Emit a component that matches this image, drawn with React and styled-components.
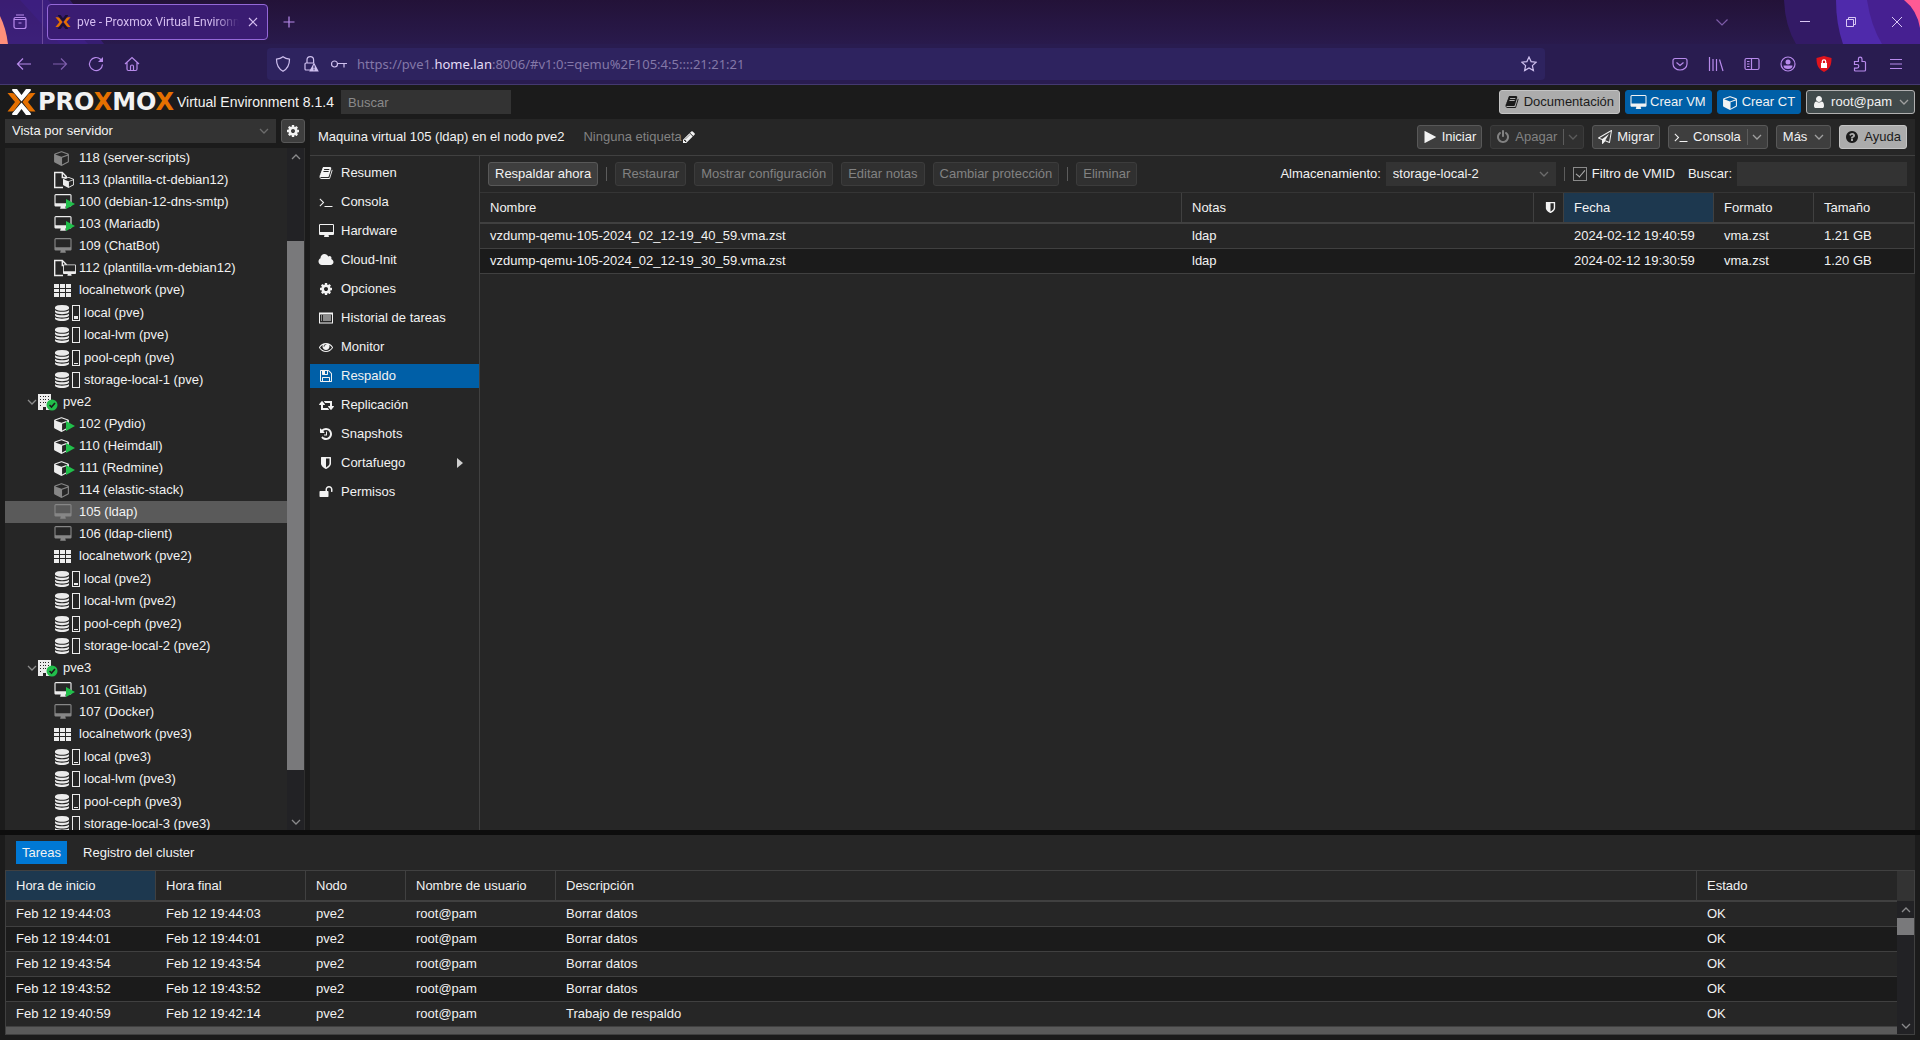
import React from "react";
import styled, { createGlobalStyle } from "styled-components";

const desktopPath =
  "M1792 992v-832q0-13-9.5-22.5t-22.5-9.5h-1600q-13 0-22.5 9.5t-9.5 22.5v832q0 13 9.5 22.5t22.5 9.5h1600q13 0 22.5-9.5t9.5-22.5zm128-832v1088q0 66-47 113t-113 47h-544q0 37 16 77.5t32 71 16 43.5q0 26-19 45t-45 19h-512q-26 0-45-19t-19-45q0-14 16-44t32-70 16-78h-544q-66 0-113-47t-47-113v-1088q0-66 47-113t113-47h1600q66 0 113 47t47 113z";
const cubePath =
  "M896 1629l640-349v-636l-640 233v752zm-64-865l698-254-698-254-698 254zm832-252v768q0 35-18 65t-49 47l-704 384q-28 16-61 16t-61-16l-704-384q-31-17-49-47t-18-65v-768q0-40 23-73t61-47l704-256q22-8 44-8t44 8l704 256q38 14 61 47t23 73z";
const databasePath =
  "M896 768q237 0 443-43t325-127v170q0 69-103 128t-280 93.5-385 34.5-385-34.5-280-93.5-103-128v-170q119 84 325 127t443 43zm0 768q237 0 443-43t325-127v170q0 69-103 128t-280 93.5-385 34.5-385-34.5-280-93.5-103-128v-170q119 84 325 127t443 43zm0-384q237 0 443-43t325-127v170q0 69-103 128t-280 93.5-385 34.5-385-34.5-280-93.5-103-128v-170q119 84 325 127t443 43zm0-1152q208 0 385 34.5t280 93.5 103 128v128q0 69-103 128t-280 93.5-385 34.5-385-34.5-280-93.5-103-128v-128q0-69 103-128t280-93.5 385-34.5z";

// name: [viewBox width, path]
const glyphs = {
  desktop: [1920, desktopPath],
  cube: [1664, cubePath],
  book: [
    1792,
    "M1703 478q40 57 18 129l-275 906q-19 64-76.5 107.5t-122.5 43.5h-923q-77 0-148.5-53.5t-99.5-131.5q-24-67-2-127 0-4 3-27t4-37q1-8-3-21.5t-3-19.5q2-11 8-21t16.5-23.5 16.5-23.5q23-38 45-91.5t30-91.5q3-10 .5-30t-.5-28q3-11 17-28t17-23q21-36 42-92t25-90q1-9-2.5-32t.5-28q4-13 22-30.5t22-22.5q19-26 42.5-84.5t27.5-96.5q1-8-3-25.5t-2-26.5q2-8 9-18t18-23 17-21q8-12 16.5-30.5t15-35 16-36 19.5-32 26.5-23.5 36-11.5 47.5 5.5l-1 3q38-9 51-9h761q74 0 114 56t18 130l-274 906q-36 119-71.5 153.5t-128.5 34.5h-869q-27 0-38 15-11 16-1 43 24 70 144 70h923q29 0 56-15.5t35-41.5l300-987q7-22 5-57 38 15 59 43zm-1064 2q-4 13 2 22.5t20 9.5h608q13 0 25.5-9.5t16.5-22.5l21-64q4-13-2-22.5t-20-9.5h-608q-13 0-25.5 9.5t-16.5 22.5zm-83 256q-4 13 2 22.5t20 9.5h608q13 0 25.5-9.5t16.5-22.5l21-64q4-13-2-22.5t-20-9.5h-608q-13 0-25.5 9.5t-16.5 22.5z",
  ],
  cog: [
    1792,
    "M1152 896q0-106-75-181t-181-75-181 75-75 181 75 181 181 75 181-75 75-181zm512-109v222q0 12-8 23t-20 13l-185 28q-19 54-39 91 35 50 107 138 10 12 10 25t-9 23q-27 37-99 108t-94 71q-12 0-26-9l-138-108q-44 23-91 38-16 136-29 186-7 28-36 28h-222q-14 0-24.5-8.5t-11.5-21.5l-28-184q-49-16-90-37l-141 107q-10 9-25 9-14 0-25-11-126-114-165-168-7-10-7-23 0-12 8-23 15-21 51-66.5t54-70.5q-27-50-41-99l-183-27q-13-2-21-12.5t-8-23.5v-222q0-12 8-23t19-13l186-28q14-46 39-92-40-57-107-138-10-12-10-24 0-10 9-23 26-36 98.5-107.5t94.5-71.5q13 0 26 10l138 107q44-23 91-38 16-136 29-186 7-28 36-28h222q14 0 24.5 8.5t11.5 21.5l28 184q49 16 90 37l142-107q9-9 24-9 13 0 25 10 129 119 165 170 7 8 7 22 0 12-8 23-15 21-51 66.5t-54 70.5q26 50 41 98l183 28q13 2 21 12.5t8 23.5z",
  ],
  terminal: [
    1792,
    "M649 983l-466 466q-10 10-23 10t-23-10l-50-50q-10-10-10-23t10-23l393-393-393-393q-10-10-10-23t10-23l50-50q10-10 23-10t23 10l466 466q10 10 10 23t-10 23zm1079 457v64q0 14-9 23t-23 9h-960q-14 0-23-9t-9-23v-64q0-14 9-23t23-9h960q14 0 23 9t9 23z",
  ],
  cloud: [
    2048,
    "M1984 1152q0 159-112.5 271.5t-271.5 112.5h-1088q-185 0-316.5-131.5t-131.5-316.5q0-132 71-241.5t187-163.5q-2-28-2-43 0-212 150-362t362-150q158 0 286.5 88t187.5 230q70-62 166-62 106 0 181 75t75 181q0 75-41 138 129 30 213 134.5t84 239.5z",
  ],
  list: [
    1792,
    "M0 192h1792v1408h-1792zm128 256v1024h1536v-1024zM256 576h128v128h-128zM512 576h1024v128h-1024zM256 832h128v128h-128zM512 832h1024v128h-1024zM256 1088h128v128h-128zM512 1088h1024v128h-1024z",
  ],
  eye: [
    1792,
    "M1664 960q-152-236-381-353 61 104 61 225 0 185-131.5 316.5t-316.5 131.5-316.5-131.5-131.5-316.5q0-121 61-225-229 117-381 353 133 205 333.5 326.5t434.5 121.5 434.5-121.5 333.5-326.5zm-720-384q0-20-14-34t-34-14q-125 0-214.5 89.5t-89.5 214.5q0 20 14 34t34 14 34-14 14-34q0-86 61-147t147-61q20 0 34-14t14-34zm848 384q0 34-20 69-140 230-376.5 368.5t-499.5 138.5-499.5-139-376.5-368q-20-35-20-69t20-69q140-229 376.5-368t499.5-139 499.5 139 376.5 368q20 35 20 69z",
  ],
  floppy: [
    1792,
    "M512 1536h768v-384h-768v384zm896 0h128v-896q0-14-10-38.5t-20-34.5l-281-281q-10-10-34-20t-39-10v416q0 40-28 68t-68 28h-576q-40 0-68-28t-28-68v-416h-128v1280h128v-416q0-40 28-68t68-28h832q40 0 68 28t28 68v416zm-384-928v-320q0-13-9.5-22.5t-22.5-9.5h-192q-13 0-22.5 9.5t-9.5 22.5v320q0 13 9.5 22.5t22.5 9.5h192q13 0 22.5-9.5t9.5-22.5zm640 32v928q0 40-28 68t-68 28h-1344q-40 0-68-28t-28-68v-1344q0-40 28-68t68-28h928q40 0 88 20t76 48l280 280q28 28 48 76t20 88z",
  ],
  retweet: [
    1920,
    "M1280 1504q0 13-9.5 22.5t-22.5 9.5h-960q-8 0-13.5-2t-9-7-5.5-8-3-11.5-1-11.5v-600h-192q-26 0-45-19t-19-45q0-24 15-41l320-384q19-22 49-22t49 22l320 384q15 17 15 41 0 26-19 45t-45 19h-192v384h576q16 0 25 11l160 192q7 10 7 21zm640-416q0 24-15 41l-320 384q-20 23-49 23t-49-23l-320-384q-15-17-15-41 0-26 19-45t45-19h192v-384h-576q-16 0-25-12l-160-192q-7-9-7-20 0-13 9.5-22.5t22.5-9.5h960q8 0 13.5 2t9 7 5.5 8 3 11.5 1 11.5v600h192q26 0 45 19t19 45z",
  ],
  history: [
    1792,
    "M1664 896q0 156-61 298t-164 245-245 164-298 61q-172 0-327-72.5t-264-204.5q-7-10-6.5-22.5t8.5-20.5l137-138q10-9 25-9 16 2 23 12 73 95 179 147t225 52q104 0 198.5-40.5t163.5-109.5 109.5-163.5 40.5-198.5-40.5-198.5-109.5-163.5-163.5-109.5-198.5-40.5q-98 0-188 35.5t-160 101.5l137 138q31 30 14 69-17 40-59 40h-448q-26 0-45-19t-19-45v-448q0-42 40-59 39-17 69 14l130 129q107-101 244.5-156.5t284.5-55.5q156 0 298 61t245 164 164 245 61 298zm-640-288v448q0 14-9 23t-23 9h-320q-14 0-23-9t-9-23v-64q0-14 9-23t23-9h224v-352q0-14 9-23t23-9h64q14 0 23 9t9 23z",
  ],
  shield: [
    1792,
    "M1344 960v-640h-448v1137q119-63 213-137 235-184 235-360zm192-768v768q0 86-33.5 170.5t-83 150-118 127.5-126.5 103-121 77.5-89.5 49.5-42.5 20q-12 6-26 6t-26-6q-16-7-42.5-20t-89.5-49.5-121-77.5-126.5-103-118-127.5-83-150-33.5-170.5v-768q0-26 19-45t45-19h1152q26 0 45 19t19 45z",
  ],
  unlock: [
    1792,
    "M1728 576v256q0 26-19 45t-45 19h-64q-26 0-45-19t-19-45v-256q0-106-75-181t-181-75-181 75-75 181v192h96q40 0 68 28t28 68v576q0 40-28 68t-68 28h-960q-40 0-68-28t-28-68v-576q0-40 28-68t68-28h672v-192q0-185 131.5-316.5t316.5-131.5 316.5 131.5 131.5 316.5z",
  ],
  pencil: [
    1792,
    "M491 1536l91-91-235-235-91 91v107h128v128h107zm523-928q0-22-22-22-10 0-17 7l-542 542q-7 7-7 17 0 22 22 22 10 0 17-7l542-542q7-7 7-17zm-54-192l416 416-832 832h-416v-416zm683 96q0 53-37 90l-166 166-416-416 166-165q36-38 90-38 53 0 91 38l235 234q37 39 37 91z",
  ],
  play: [1792, "M192 160q0-60 52-30l1400 742q40 24 0 48l-1400 742q-52 30-52-30z"],
  power: [
    1792,
    "M1664 896q0 156-61 298t-164 245-245 164-298 61-298-61-245-164-164-245-61-298q0-182 80.5-343t226.5-270q43-32 95.5-25t83.5 50q32 42 24.5 94.5t-49.5 84.5q-98 74-151.5 181t-53.5 228q0 104 40.5 198.5t109.5 163.5 163.5 109.5 198.5 40.5 198.5-40.5 163.5-109.5 109.5-163.5 40.5-198.5q0-121-53.5-228t-151.5-181q-42-32-49.5-84.5t24.5-94.5q31-43 84-50t95 25q146 109 226.5 270t80.5 343zm-640-768v640q0 52-38 90t-90 38-90-38-38-90v-640q0-52 38-90t90-38 90 38 38 90z",
  ],
  plane: [
    1792,
    "M1764 11q33 24 27 64l-256 1536q-5 29-32 45-14 8-31 8-11 0-24-5l-527-215-298 327q-18 21-47 21-14 0-23-4-19-7-30-23.5t-11-36.5v-452l-472-193q-37-14-40-55-3-39 32-59l1664-960q35-21 68 2zm-342 1499l221-1323-1434 827 336 137 863-639-478 797z",
  ],
  question: [
    1792,
    "M1024 1376v-192q0-14-9-23t-23-9h-192q-14 0-23 9t-9 23v192q0 14 9 23t23 9h192q14 0 23-9t9-23zm256-672q0-88-55.5-163t-138.5-116-170-41q-243 0-371 213-15 24 8 42l132 100q7 6 19 6 16 0 25-12 53-68 86-92 34-24 86-24 48 0 85.5 26t37.5 59q0 38-20 61t-68 45q-63 28-115.5 86.5t-52.5 125.5v36q0 14 9 23t23 9h192q14 0 23-9t9-23q0-19 21.5-49.5t54.5-49.5q32-18 49-28.5t46-35 44.5-48 28-60.5 12.5-81zm384 192q0 209-103 385.5t-279.5 279.5-385.5 103-385.5-103-279.5-279.5-103-385.5 103-385.5 279.5-279.5 385.5-103 385.5 103 279.5 279.5 103 385.5z",
  ],
  user: [
    1792,
    "M1536 1399q0 109-62.5 187t-150.5 78h-854q-88 0-150.5-78t-62.5-187q0-85 8.5-160.5t31.5-152 58.5-131 94-89 134.5-34.5q131 128 313 128t313-128q76 0 134.5 34.5t94 89 58.5 131 31.5 152 8.5 160.5zm-256-887q0 159-112.5 271.5t-271.5 112.5-271.5-112.5-112.5-271.5 112.5-271.5 271.5-112.5 271.5 112.5 112.5 271.5z",
  ],
};

const Glyph = ({ name, size = 14 }) => {
  const [width, d] = glyphs[name];
  return (
    <svg
      height={size}
      width={Math.ceil((size * width) / 1792)}
      viewBox={`0 0 ${width} 1792`}
      fill="currentColor"
      fillRule={name === "list" ? "evenodd" : "nonzero"}
      aria-hidden="true"
    >
      <path d={d} />
    </svg>
  );
};

const Chevron = ({ up }) => (
  <svg width="10" height="6" viewBox="0 0 10 6" fill="none" stroke="currentColor" aria-hidden="true">
    <path d={up ? "M1 5l4-4 4 4" : "M1 1l4 4 4-4"} strokeWidth="1.3" />
  </svg>
);

const treeRows = [
  { icon: "ctOff", text: "118 (server-scripts)" },
  { icon: "ctTemplate", text: "113 (plantilla-ct-debian12)" },
  { icon: "vmOn", text: "100 (debian-12-dns-smtp)" },
  { icon: "vmOn", text: "103 (Mariadb)" },
  { icon: "vmOff", text: "109 (ChatBot)" },
  { icon: "vmTemplate", text: "112 (plantilla-vm-debian12)" },
  { icon: "network", text: "localnetwork (pve)" },
  { icon: "storage", text: "local (pve)", usage: 3 },
  { icon: "storage", text: "local-lvm (pve)" },
  { icon: "storage", text: "pool-ceph (pve)", usage: 1 },
  { icon: "storage", text: "storage-local-1 (pve)" },
  { icon: "node", text: "pve2" },
  { icon: "ctOn", text: "102 (Pydio)" },
  { icon: "ctOn", text: "110 (Heimdall)" },
  { icon: "ctOn", text: "111 (Redmine)" },
  { icon: "ctOff", text: "114 (elastic-stack)" },
  { icon: "vmOff", text: "105 (ldap)", selected: true },
  { icon: "vmOff", text: "106 (ldap-client)" },
  { icon: "network", text: "localnetwork (pve2)" },
  { icon: "storage", text: "local (pve2)", usage: 2 },
  { icon: "storage", text: "local-lvm (pve2)" },
  { icon: "storage", text: "pool-ceph (pve2)", usage: 1 },
  { icon: "storage", text: "storage-local-2 (pve2)" },
  { icon: "node", text: "pve3" },
  { icon: "vmOn", text: "101 (Gitlab)" },
  { icon: "vmOff", text: "107 (Docker)" },
  { icon: "network", text: "localnetwork (pve3)" },
  { icon: "storage", text: "local (pve3)", usage: 1 },
  { icon: "storage", text: "local-lvm (pve3)" },
  { icon: "storage", text: "pool-ceph (pve3)", usage: 1 },
  { icon: "storage", text: "storage-local-3 (pve3)" },
];

const navItems = [
  { icon: "book", text: "Resumen" },
  { icon: "terminal", text: "Consola" },
  { icon: "desktop", text: "Hardware" },
  { icon: "cloud", text: "Cloud-Init" },
  { icon: "cog", text: "Opciones" },
  { icon: "list", text: "Historial de tareas" },
  { icon: "eye", text: "Monitor" },
  { icon: "floppy", text: "Respaldo", active: true },
  { icon: "retweet", text: "Replicación" },
  { icon: "history", text: "Snapshots" },
  { icon: "shield", text: "Cortafuego", more: true },
  { icon: "unlock", text: "Permisos" },
];

const backups = [
  ["vzdump-qemu-105-2024_02_12-19_40_59.vma.zst", "ldap", "", "2024-02-12 19:40:59", "vma.zst", "1.21 GB"],
  ["vzdump-qemu-105-2024_02_12-19_30_59.vma.zst", "ldap", "", "2024-02-12 19:30:59", "vma.zst", "1.20 GB"],
];

const tasks = [
  ["Feb 12 19:44:03", "Feb 12 19:44:03", "pve2", "root@pam", "Borrar datos", "OK"],
  ["Feb 12 19:44:01", "Feb 12 19:44:01", "pve2", "root@pam", "Borrar datos", "OK"],
  ["Feb 12 19:43:54", "Feb 12 19:43:54", "pve2", "root@pam", "Borrar datos", "OK"],
  ["Feb 12 19:43:52", "Feb 12 19:43:52", "pve2", "root@pam", "Borrar datos", "OK"],
  ["Feb 12 19:40:59", "Feb 12 19:42:14", "pve2", "root@pam", "Trabajo de respaldo", "OK"],
];

const TreeIcon = ({ icon, usage }) => {
  const white = "#ececec";
  const gray = "#868686";
  const green = "#21bf4b";
  if (icon === "node") {
    return (
      <svg width="25" height="18" aria-hidden="true">
        <path
          fill={white}
          fillRule="evenodd"
          d="M0 1h13v16H0zM2 3v1h1v-1zM5 3v1h1v-1zM7 3v1h1v-1zM10 3v1h1v-1zM2 6v1h1v-1zM5 6v1h1v-1zM7 6v1h1v-1zM10 6v1h1v-1zM2 9v1h1v-1zM5 9v1h1v-1zM7 9v1h1v-1zM2 12v1h1v-1zM5 14v3h3v-3z"
        />
        <circle cx="14" cy="12" r="5.5" fill={green} />
        <path d="M11.500 12l2 2 3.500-4" fill="none" stroke="#1b1b1b" strokeWidth="1.6" />
      </svg>
    );
  }
  if (icon === "network") {
    return (
      <svg width="25" height="18" aria-hidden="true">
        {[3, 8, 12].map((y) =>
          [0, 6, 12].map((x) => <rect key={`${x}${y}`} x={x} y={y} width="5" height={y === 8 ? 3 : 4} fill={white} />)
        )}
      </svg>
    );
  }
  if (icon === "storage") {
    return (
      <svg width="30" height="18" aria-hidden="true">
        <svg x="1" y="1" width="14" height="16" viewBox="128 0 1536 1792" preserveAspectRatio="none">
          <path d={databasePath} fill={white} />
        </svg>
        <rect x="18.500" y="1.500" width="7" height="15" fill="none" stroke={white} />
        {usage && <rect x="20" y={15 - usage} width="4" height={usage} fill={white} />}
      </svg>
    );
  }
  if (icon === "ctTemplate" || icon === "vmTemplate") {
    return (
      <svg width="25" height="18" aria-hidden="true">
        <path d="M9 16.500H.7V1.500h7.600l4 4V8M8.300 1.500v5H12" fill="none" stroke={white} strokeWidth="1.4" />
        {icon === "ctTemplate" ? (
          <svg x="9" y="5" width="11" height="12" viewBox="0 0 1664 1792">
            <path d="M0 512L832 200l832 312v800l-832 440-832-440z" fill="#262626" />
            <path d={cubePath} fill={white} />
          </svg>
        ) : (
          <svg x="9" y="5" width="13" height="13" viewBox="0 0 1920 1792">
            <path d="M60 60h1800v1300H60z" fill="#262626" />
            <path d={desktopPath} fill={white} />
          </svg>
        )}
      </svg>
    );
  }
  const on = icon.endsWith("On");
  const vm = icon.startsWith("vm");
  return (
    <svg width="25" height="18" aria-hidden="true">
      <svg y="1" width={vm ? 18 : 15} height="16" viewBox={vm ? "0 0 1920 1792" : "0 0 1664 1792"}>
        <path d={vm ? desktopPath : cubePath} fill={on ? white : gray} />
      </svg>
      {on && <path d="M12 6l9 5-9 5z" fill={green} />}
    </svg>
  );
};

// Browser toolbar icons, all drawn on a 16px grid
const shapes = {
  view: <path d="M2 5.500h12v7a2 2 0 0 1-2 2H4a2 2 0 0 1-2-2zM2 5.500c0-1 .5-2 1.500-2h9c1 0 1.500 1 1.500 2M4 1h8M6.500 9h3" />,
  plus: <path d="M8 2.500v11M2.500 8h11" />,
  close: <path d="M4 4l8 8M12 4l-8 8" />,
  down: <path d="M2.500 5.500L8 11l5.500-5.500" />,
  back: <path d="M15 8H1.500M7 2.500L1.500 8 7 13.500" />,
  forward: <path d="M1 8h13.500M9 2.500L14.500 8 9 13.500" />,
  reload: (
    <>
      <path d="M14.500 8.500a6.500 6.500 0 1 1-2-5.200L14 5" />
      <path d="M15 1v5h-5z" fill="currentColor" stroke="none" />
    </>
  ),
  home: <path d="M1 8l7-6.500L15 8M3 6.500V13a1.500 1.500 0 0 0 1.500 1.500h7A1.500 1.500 0 0 0 13 13V6.500M6.500 14.500v-4a1.500 1.500 0 0 1 3 0v4" />,
  guard: <path d="M8 .8c2 1.600 4 2.200 6.500 2.400 0 6-1.500 9.300-6.500 12-5-2.700-6.500-6-6.500-12C4 3 6 2.400 8 .8z" />,
  lock: (
    <>
      <path d="M8 14H3a1 1 0 0 1-1-1V8a1 1 0 0 1 1-1h8M4 7V4a3.300 3.300 0 0 1 6.600 0v3" />
      <path d="M11 6.500L15.800 15.500H6.200z" fill="currentColor" stroke="none" />
      <path d="M11 9.500v3M11 13.300v1" stroke="#2e235f" />
    </>
  ),
  key: (
    <>
      <circle cx="3.500" cy="8" r="3" />
      <path d="M6.500 7.500h9.500M13 7.500v4" />
    </>
  ),
  star: <path d="M8 1l2.100 4.600 5 .6-3.700 3.400 1 5L8 12l-4.400 2.600 1-5L.9 6.200l5-.6z" />,
  pocket: <path d="M3 2.500h10a2 2 0 0 1 2 2V8a7 6 0 0 1-14 0V4.500a2 2 0 0 1 2-2zM4.500 6.500L8 9.500l3.500-3" />,
  library: <path d="M1.500 1v14M5 3v12M8.500 3v12M11.500 3.500L15 15" />,
  sidebar: <path d="M2.500 2.500h11a1.500 1.500 0 0 1 1.500 1.500v8a1.500 1.500 0 0 1-1.500 1.500h-11A1.500 1.500 0 0 1 1 12V4a1.500 1.500 0 0 1 1.500-1.500zM7.500 2.500v11M3 5.500h2.500M3 8h2.500M3 10.500h2.500" />,
  account: (
    <>
      <circle cx="8" cy="8" r="7" />
      <circle cx="8" cy="6" r="2.500" fill="currentColor" stroke="none" />
      <path d="M3.500 9.500h9a4.500 3.500 0 0 1-9 0z" fill="currentColor" stroke="none" />
    </>
  ),
  blocker: (
    <>
      <path d="M8 0l7.500 2c0 7-1.500 11-7.500 14C2 13 .5 9 .5 2z" fill="#e0131c" stroke="none" />
      <path d="M5 7h6v5H5z" fill="#fff" stroke="none" />
      <path d="M6.300 7V5.500a1.700 1.700 0 0 1 3.400 0V7" stroke="#fff" />
    </>
  ),
  puzzle: <path d="M3 15h9.500a1 1 0 0 0 1-1V6.500a1 1 0 0 0-1-1H10V3a1.800 1.800 0 0 0-3.600 0v2.500H2.500v3H5a1.800 1.800 0 0 1 0 3.600H2.500V14.500z" />,
  menu: <path d="M2 3.500h12M2 8h12M2 12.500h12" />,
  minimize: <path d="M3 7.500h10" strokeWidth="1" />,
  restore: <path d="M3.500 5.500h7v7h-7zM5.500 5.500v-2h7v7h-2" strokeWidth="1" />,
  quit: <path d="M3 3l10 10M13 3L3 13" strokeWidth="1" />,
};

const Shape = ({ name }) => (
  <svg width="16" height="16" viewBox="0 0 16 16" fill="none" stroke="currentColor" strokeWidth="1.2" aria-hidden="true">
    {shapes[name]}
  </svg>
);

const ProxmoxMark = ({ width, height, top = "#fff" }) => (
  <svg width={width} height={height} viewBox="0 0 28 26" aria-hidden="true">
    <path d="M5 0h4.500l4.500 6 4.500-6H23q1 1 0 2l-9 10.500L5 2Q4 1 5 0zM5 26h4.500l4.500-6 4.500 6H23q1-1 0-2l-9-10.500L5 24q-1 1 0 2z" fill={top} />
    <path d="M0 4h4q2 0 3 1l6 8-6 8q-1 1.500-3 1.500H0L7.500 13zM28 4h-4q-2 0-3 1l-6 8 6 8q1 1.500 3 1.500h4L20.500 13z" fill="#e57000" />
  </svg>
);

const DataTable = ({ label, columns, rows, sorted }) => (
  <Table aria-label={label}>
    <colgroup>
      {columns.map((col, i) => (
        <Col key={i} $width={col.width} />
      ))}
    </colgroup>
    <thead>
      <tr>
        {columns.map((col, i) => (
          <Th key={i} scope="col" $sorted={i === sorted}>
            {col.title}
          </Th>
        ))}
      </tr>
    </thead>
    <tbody>
      {rows.map((row, r) => (
        <Row key={r}>
          {row.map((cell, i) => (
            <Td key={i}>{cell}</Td>
          ))}
        </Row>
      ))}
    </tbody>
  </Table>
);

const Browser = () => (
  <BrowserBar>
    <TabStrip>
      <Backdrop viewBox="0 0 120 44" $side="left">
        <path d="M0 0h48l40 44H0z" fill="#4a259a" opacity=".6" />
        <path d="M20 0h50l34 44H60z" fill="#3d2085" opacity=".7" />
        <path d="M0 16q6 12 8 28H0z" fill="#ff8f7a" />
      </Backdrop>
      <Backdrop viewBox="0 0 140 44" $side="right">
        <path d="M4 0q1 26 12 44h124V0z" fill="#331a66" />
        <path d="M56 0q0 24 7 44h77V0z" fill="#4f2aab" />
        <path d="M87 0q4 26 15 44h38V0z" fill="#462091" />
        <path d="M124 0q13 10 16 28V0z" fill="#ff5a94" />
      </Backdrop>
      <ViewButton aria-label="Firefox View">
        <Shape name="view" />
      </ViewButton>
      <Tab>
        <ProxmoxMark width={16} height={14} top="#1c0f33" />
        <TabTitle>pve - Proxmox Virtual Environm</TabTitle>
        <TabClose aria-label="Cerrar pestaña">
          <Shape name="close" />
        </TabClose>
      </Tab>
      <ChromeButton aria-label="Nueva pestaña" $wide={42}>
        <Shape name="plus" />
      </ChromeButton>
      <Spacer />
      <ChromeButton aria-label="Listar pestañas" $dim $wide={120}>
        <Shape name="down" />
      </ChromeButton>
      <ChromeButton aria-label="Minimizar" $wide={46} $light>
        <Shape name="minimize" />
      </ChromeButton>
      <ChromeButton aria-label="Restaurar" $wide={46} $light>
        <Shape name="restore" />
      </ChromeButton>
      <ChromeButton aria-label="Cerrar" $wide={46} $light>
        <Shape name="quit" />
      </ChromeButton>
    </TabStrip>
    <NavBar>
      <ChromeButton aria-label="Atrás">
        <Shape name="back" />
      </ChromeButton>
      <ChromeButton aria-label="Adelante" $dim>
        <Shape name="forward" />
      </ChromeButton>
      <ChromeButton aria-label="Recargar">
        <Shape name="reload" />
      </ChromeButton>
      <ChromeButton aria-label="Inicio">
        <Shape name="home" />
      </ChromeButton>
      <UrlBar>
        <Shape name="guard" />
        <Shape name="lock" />
        <Shape name="key" />
        <Url>
          https://pve1.<b>home.lan</b>:8006/#v1:0:=qemu%2F105:4:5::::21:21:21
        </Url>
        <Shape name="star" />
      </UrlBar>
      {["pocket", "library", "sidebar", "account", "blocker", "puzzle", "menu"].map((name) => (
        <ChromeButton key={name} aria-label={name}>
          <Shape name={name} />
        </ChromeButton>
      ))}
    </NavBar>
  </BrowserBar>
);

const Header = () => (
  <HeaderBar>
    <Logo>
      <ProxmoxMark width={29} height={26} />
      <Wordmark>
        PRO<i>X</i>MO<i>X</i>
      </Wordmark>
    </Logo>
    <Version>Virtual Environment 8.1.4</Version>
    <SearchInput placeholder="Buscar" aria-label="Buscar" />
    <Spacer />
    <HeaderButtons>
      <Button $kind="light">
        <IconSlot>
          <Glyph name="book" />
        </IconSlot>
        Documentación
      </Button>
      <Button $kind="blue">
        <IconSlot>
          <Glyph name="desktop" size={15} />
        </IconSlot>
        Crear VM
      </Button>
      <Button $kind="blue">
        <IconSlot>
          <Glyph name="cube" size={15} />
        </IconSlot>
        Crear CT
      </Button>
      <Button $kind="user">
        <IconSlot>
          <Glyph name="user" />
        </IconSlot>
        root@pam
        <Arrow>
          <Chevron />
        </Arrow>
      </Button>
    </HeaderButtons>
  </HeaderBar>
);

const ResourceTree = () => (
  <Sidebar>
    <ViewRow>
      <SelectBox>
        <Select aria-label="Vista" defaultValue="server">
          <option value="server">Vista por servidor</option>
        </Select>
        <SelectArrow>
          <Chevron />
        </SelectArrow>
      </SelectBox>
      <GearButton aria-label="Ajustes">
        <Glyph name="cog" />
      </GearButton>
    </ViewRow>
    <TreePanel>
      <TreeScroll>
        <TreeList>
          {treeRows.map((row) => (
            <TreeRow key={row.text} $node={row.icon === "node"} $selected={row.selected} $tall={row.usage > 0}>
              {row.icon === "node" && (
                <Caret>
                  <Chevron />
                </Caret>
              )}
              <TreeIcon icon={row.icon} usage={row.usage} />
              {row.text}
            </TreeRow>
          ))}
        </TreeList>
      </TreeScroll>
      <ScrollTrack>
        <ScrollEnd>
          <Chevron up />
        </ScrollEnd>
        <TreeThumb />
        <ScrollEnd>
          <Chevron />
        </ScrollEnd>
      </ScrollTrack>
    </TreePanel>
  </Sidebar>
);

const Content = () => (
  <ContentPanel>
    <TitleBar>
      <span>Maquina virtual 105 (ldap) en el nodo pve2</span>
      <Tags>
        Ninguna etiqueta
        <PlainButton aria-label="Editar etiquetas">
          <Glyph name="pencil" />
        </PlainButton>
      </Tags>
      <Spacer />
      <TitleButtons>
        <Button>
          <IconSlot>
            <Glyph name="play" />
          </IconSlot>
          Iniciar
        </Button>
        <Button disabled>
          <IconSlot>
            <Glyph name="power" />
          </IconSlot>
          Apagar
          <Arrow $split>
            <Chevron />
          </Arrow>
        </Button>
        <Button>
          <IconSlot>
            <Glyph name="plane" />
          </IconSlot>
          Migrar
        </Button>
        <Button>
          <IconSlot>
            <Glyph name="terminal" />
          </IconSlot>
          Consola
          <Arrow $split>
            <Chevron />
          </Arrow>
        </Button>
        <Button $plain>
          Más
          <Arrow>
            <Chevron />
          </Arrow>
        </Button>
        <Button $kind="light">
          <IconSlot>
            <Glyph name="question" />
          </IconSlot>
          Ayuda
        </Button>
      </TitleButtons>
    </TitleBar>
    <ContentBody>
      <SideNav>
        {navItems.map((item) => (
          <NavLink key={item.text} href="#" $active={item.active}>
            <IconSlot>
              <Glyph name={item.icon} />
            </IconSlot>
            {item.text}
            {item.more && <MoreMark viewBox="0 0 6 10"><path d="M0 0l6 5-6 5z" /></MoreMark>}
          </NavLink>
        ))}
      </SideNav>
      <BackupPanel>
        <Toolbar>
          <Button $plain>Respaldar ahora</Button>
          <Divider />
          <Button $plain disabled>Restaurar</Button>
          <Button $plain disabled>Mostrar configuración</Button>
          <Button $plain disabled>Editar notas</Button>
          <Button $plain disabled>Cambiar protección</Button>
          <Divider />
          <Button $plain disabled>Eliminar</Button>
          <Spacer />
          <Field>
            Almacenamiento:
            <SelectBox $width={170}>
              <Select defaultValue="storage-local-2">
                <option>storage-local-2</option>
              </Select>
              <SelectArrow>
                <Chevron />
              </SelectArrow>
            </SelectBox>
          </Field>
          <Divider />
          <CheckField>
            <Checkbox type="checkbox" defaultChecked />
            Filtro de VMID
          </CheckField>
          <Field>
            Buscar:
            <FilterInput type="text" />
          </Field>
        </Toolbar>
        <TableFrame>
          <DataTable
            label="Respaldos"
            sorted={3}
            columns={[
              { title: "Nombre", width: "auto" },
              { title: "Notas", width: "352px" },
              { title: <Glyph name="shield" size={13} />, width: "30px" },
              { title: "Fecha", width: "150px" },
              { title: "Formato", width: "100px" },
              { title: "Tamaño", width: "100px" },
            ]}
            rows={backups}
          />
        </TableFrame>
      </BackupPanel>
    </ContentBody>
  </ContentPanel>
);

const TaskLog = () => (
  <TaskPanel>
    <TaskTabs>
      <TaskTab $active>Tareas</TaskTab>
      <TaskTab>Registro del cluster</TaskTab>
    </TaskTabs>
    <TaskGrid>
      <TaskRows>
        <DataTable
          label="Tareas"
          sorted={0}
          columns={[
            { title: "Hora de inicio", width: "150px" },
            { title: "Hora final", width: "150px" },
            { title: "Nodo", width: "100px" },
            { title: "Nombre de usuario", width: "150px" },
            { title: "Descripción", width: "auto" },
            { title: "Estado", width: "200px" },
          ]}
          rows={tasks}
        />
        <NextRow />
      </TaskRows>
      <TaskScroll>
        <ScrollCorner />
        <ScrollTrack>
          <ScrollEnd>
            <Chevron up />
          </ScrollEnd>
          <TaskThumb />
          <Spacer />
          <ScrollEnd>
            <Chevron />
          </ScrollEnd>
        </ScrollTrack>
      </TaskScroll>
    </TaskGrid>
  </TaskPanel>
);

const App = () => {
  return (
    <>
      <GlobalStyle />
      <Page>
        <Browser />
        <Header />
        <Workspace>
          <ResourceTree />
          <Content />
        </Workspace>
        <Splitter />
        <TaskLog />
      </Page>
    </>
  );
};

export default App;

const GlobalStyle = createGlobalStyle`
  * {
    box-sizing: border-box;
  }
  body {
    margin: 0;
    background: #1b1b1b;
    color: #f2f2f2;
    font: 13px/16px "Liberation Sans", Arial, sans-serif;
  }
  button, input, select {
    font: inherit;
    color: inherit;
  }
  svg {
    display: block;
    flex: none;
  }
`;

const Page = styled.div`
  display: flex;
  flex-direction: column;
  height: 100vh;
`;

const Spacer = styled.div`
  flex: 1;
`;

const BrowserBar = styled.div`
  flex: none;
  background: #291c50;
  border-bottom: 1px solid #443970;
`;

const TabStrip = styled.div`
  position: relative;
  display: flex;
  align-items: center;
  height: 44px;
  background: linear-gradient(#231238, #291a4c);
`;

const Backdrop = styled.svg`
  position: absolute;
  top: 0;
  ${({ $side }) => $side}: 0;
  height: 44px;
`;

const ChromeButton = styled.button`
  position: relative;
  display: flex;
  align-items: center;
  justify-content: center;
  flex: none;
  width: ${({ $wide }) => $wide || 36}px;
  height: 36px;
  padding: 0;
  border: none;
  background: none;
  color: ${({ $light }) => ($light ? "#d9c8f5" : "#b78aeb")};
  opacity: ${({ $dim }) => ($dim ? 0.6 : 1)};
`;

const ViewButton = styled(ChromeButton)`
  width: 43px;
  height: 44px;
  padding-right: 2px;
  border-right: 1px solid #6b4a9c;
`;

const Tab = styled.div`
  position: relative;
  display: flex;
  align-items: center;
  gap: 6px;
  width: 221px;
  height: 36px;
  margin-left: 4px;
  padding: 0 6px 0 7px;
  border: 1px solid #9468d8;
  border-radius: 4px;
  background: #3a1c72;
  color: #d4bdf0;
`;

const TabTitle = styled.span`
  flex: 1;
  overflow: hidden;
  white-space: nowrap;
  font: 12px/18px Roboto, sans-serif;
  mask-image: linear-gradient(to left, transparent, #000 24px);
`;

const TabClose = styled.button`
  padding: 0;
  border: none;
  background: none;
`;

const NavBar = styled.div`
  display: flex;
  align-items: center;
  height: 40px;
  padding: 0 6px;
`;

const UrlBar = styled.div`
  display: flex;
  align-items: center;
  flex: 1;
  gap: 12px;
  height: 32px;
  margin: 0 117px;
  padding: 0 8px;
  border-radius: 4px;
  background: #2e235f;
  color: #cfc0ef;
`;

const Url = styled.span`
  flex: 1;
  color: #8478a8;
  font: 13px/20px "Noto Sans", sans-serif;
  margin-left: -2px;

  b {
    color: #e4dcf7;
    font-weight: 400;
  }
`;

const HeaderBar = styled.header`
  display: flex;
  align-items: center;
  flex: none;
  height: 34px;
  padding: 0 5px 0 7px;
`;

const Logo = styled.div`
  display: flex;
  align-items: center;
  gap: 2px;
  width: 170px;
`;

const Wordmark = styled.span`
  font: 700 24px/26px "DejaVu Sans", sans-serif;

  i {
    color: #e57000;
    font-style: normal;
  }
`;

const Version = styled.span`
  width: 164px;
  font-size: 14px;
  white-space: nowrap;
`;

const SearchInput = styled.input`
  width: 170px;
  height: 24px;
  padding: 0 7px;
  border: none;
  background: #333;

  &::placeholder {
    color: #8a8a8a;
  }
`;

const HeaderButtons = styled.div`
  display: flex;
  gap: 5px;
`;

const buttonColors = {
  light: "background: #acacac; border-color: #c4c4c4; color: #1b1b1b;",
  blue: "background: #005fa7; border-color: #005fa7;",
  user: "background: #414a4b; border-color: #b0b0b0;",
};

const Button = styled.button`
  display: flex;
  align-items: center;
  gap: 4px;
  height: 24px;
  padding: 0 ${({ $plain }) => ($plain ? "6px" : "5px 0 4px")};
  border: 1px solid #585858;
  border-radius: 3px;
  background: #3e3e3e;
  white-space: nowrap;
  ${({ $kind }) => buttonColors[$kind]}

  &:disabled {
    border-color: #3c3c3c;
    background: #303030;
    color: #828282;
  }
`;

const IconSlot = styled.span`
  display: flex;
  justify-content: center;
  flex: none;
  width: 16px;
`;

const Arrow = styled.span`
  display: flex;
  align-items: center;
  height: 16px;
  margin-left: 2px;
  padding-left: ${({ $split }) => ($split ? 4 : 1)}px;
  border-left: ${({ $split }) => ($split ? "1px solid #5c5c5c" : "none")};
  color: #a0a0a0;

  button:disabled & {
    color: #5c5c5c;
  }
`;

const Workspace = styled.main`
  display: flex;
  flex: 1;
  gap: 5px;
  min-height: 0;
  padding: 0 5px;
`;

const Sidebar = styled.aside`
  display: flex;
  flex-direction: column;
  flex: none;
  gap: 5px;
  width: 300px;
`;

const ViewRow = styled.div`
  display: flex;
  gap: 5px;
`;

const SelectBox = styled.span`
  position: relative;
  display: block;
  flex: ${({ $width }) => ($width ? "none" : 1)};
  width: ${({ $width }) => ($width ? `${$width}px` : "auto")};
`;

const Select = styled.select`
  display: block;
  width: 100%;
  height: 24px;
  padding: 0 7px;
  border: none;
  background: #333;
  appearance: none;
`;

const SelectArrow = styled.span`
  position: absolute;
  top: 9px;
  right: 7px;
  color: #6c6c6c;
  pointer-events: none;
`;

const GearButton = styled.button`
  display: flex;
  align-items: center;
  justify-content: center;
  width: 24px;
  height: 24px;
  padding: 0;
  border: 1px solid #585858;
  border-radius: 3px;
  background: #3e3e3e;
`;

const TreePanel = styled.div`
  display: flex;
  flex: 1;
  min-height: 0;
  border-right: 1px solid #2e2e2e;
  background: #262626;
`;

const TreeScroll = styled.div`
  flex: 1;
  overflow: hidden;
`;

const TreeList = styled.ul`
  margin: -1px 0 0;
  padding: 0;
  list-style: none;
`;

const TreeRow = styled.li`
  display: flex;
  align-items: center;
  height: ${({ $tall }) => ($tall ? 23 : 22)}px;
  padding-left: ${({ $node }) => ($node ? 22 : 49)}px;
  background: ${({ $selected }) => ($selected ? "#5a5a5a" : "none")};
  white-space: nowrap;
`;

const Caret = styled.span`
  width: 11px;
  color: #8c8c8c;
`;

const ScrollTrack = styled.div`
  display: flex;
  flex-direction: column;
  flex: 1 1 auto;
  max-width: 17px;
  background: #222225;
  color: #8a8a8c;
`;

const ScrollEnd = styled.div`
  display: flex;
  align-items: center;
  justify-content: center;
  width: 17px;
  height: 17px;
`;

const TreeThumb = styled.div`
  flex: 1;
  margin: 76px 0 43px;
  background: #79797b;
`;

const TaskThumb = styled.div`
  height: 17px;
  background: #79797b;
`;

const ContentPanel = styled.section`
  display: flex;
  flex-direction: column;
  flex: 1;
  min-width: 0;
  background: #262626;
`;

const TitleBar = styled.div`
  display: flex;
  align-items: center;
  flex: none;
  height: 37px;
  padding: 0 8px;
  border-bottom: 1px solid #404040;
`;

const Tags = styled.span`
  display: flex;
  align-items: center;
  margin-left: 19px;
  color: #828282;
`;

const PlainButton = styled.button`
  padding: 0;
  border: none;
  background: none;
  color: #f2f2f2;
`;

const TitleButtons = styled.div`
  display: flex;
  gap: 8px;
`;

const ContentBody = styled.div`
  display: flex;
  flex: 1;
`;

const SideNav = styled.nav`
  display: flex;
  flex-direction: column;
  flex: none;
  gap: 5px;
  width: 170px;
  padding-top: 5px;
  border-right: 1px solid #404040;
`;

const NavLink = styled.a`
  display: flex;
  align-items: center;
  gap: 7px;
  height: 24px;
  padding: 0 16px 0 8px;
  background: ${({ $active }) => ($active ? "#005fa7" : "none")};
  color: inherit;
  text-decoration: none;
`;

const MoreMark = styled.svg`
  width: 6px;
  height: 10px;
  margin-left: auto;
  fill: #cfcfcf;
`;

const BackupPanel = styled.div`
  flex: 1;
  min-width: 0;
`;

const Toolbar = styled.div`
  display: flex;
  align-items: center;
  gap: 8px;
  height: 37px;
  padding: 0 8px;
  border-bottom: 1px solid #353535;
`;

const Divider = styled.span`
  width: 1px;
  height: 14px;
  background: #5c5c5c;
`;

const Field = styled.label`
  display: flex;
  align-items: center;
  gap: 5px;
  white-space: nowrap;
`;

const CheckField = styled(Field)`
  margin-right: 5px;
`;

const Checkbox = styled.input`
  width: 14px;
  height: 14px;
  margin: 0;
  border: 1px solid #8a8a8a;
  appearance: none;

  &:checked::before {
    content: "";
    display: block;
    width: 4px;
    height: 8px;
    margin: 0 0 0 4px;
    border: solid #b0b0b0;
    border-width: 0 1px 1px 0;
    transform: rotate(40deg);
  }
`;

const FilterInput = styled.input`
  width: 170px;
  height: 24px;
  padding: 0 7px;
  border: none;
  background: #333;
`;

const TableFrame = styled.div`
  border-right: 1px solid #404040;
`;

const Table = styled.table`
  width: 100%;
  border-spacing: 0;
  table-layout: fixed;
`;

const Col = styled.col`
  width: ${({ $width }) => $width};
`;

const Th = styled.th`
  height: 31px;
  padding: 0 10px;
  border-right: 1px solid #404040;
  border-bottom: 2px solid #404040;
  background: ${({ $sorted }) => ($sorted ? "#1d384f" : "#262626")};
  font-weight: 400;
  text-align: left;

  &:last-child {
    border-right: none;
  }
`;

const Row = styled.tr`
  &:nth-child(even) {
    background: #1b1b1b;
  }
`;

const Td = styled.td`
  height: 25px;
  padding: 0 10px;
  border-bottom: 1px solid #404040;
  white-space: nowrap;
`;

const Splitter = styled.div`
  flex: none;
  height: 5px;
  background: #0d0d0d;
`;

const TaskPanel = styled.section`
  flex: none;
  margin: 0 5px 5px;
  background: #262626;
`;

const TaskTabs = styled.div`
  display: flex;
  gap: 10px;
  padding: 6px 11px;
`;

const TaskTab = styled.button`
  height: 23px;
  padding: 0 6px;
  border: none;
  background: ${({ $active }) => ($active ? "#0078d4" : "none")};
`;

const TaskGrid = styled.div`
  display: flex;
  border: 1px solid #404040;
`;

const TaskRows = styled.div`
  flex: 1;
`;

const NextRow = styled.div`
  height: 7px;
  background: #5a5a5a;
`;

const TaskScroll = styled.div`
  display: flex;
  flex-direction: column;
  flex: none;
  width: 17px;
`;

const ScrollCorner = styled.div`
  height: 30px;
  background: #333;
`;
